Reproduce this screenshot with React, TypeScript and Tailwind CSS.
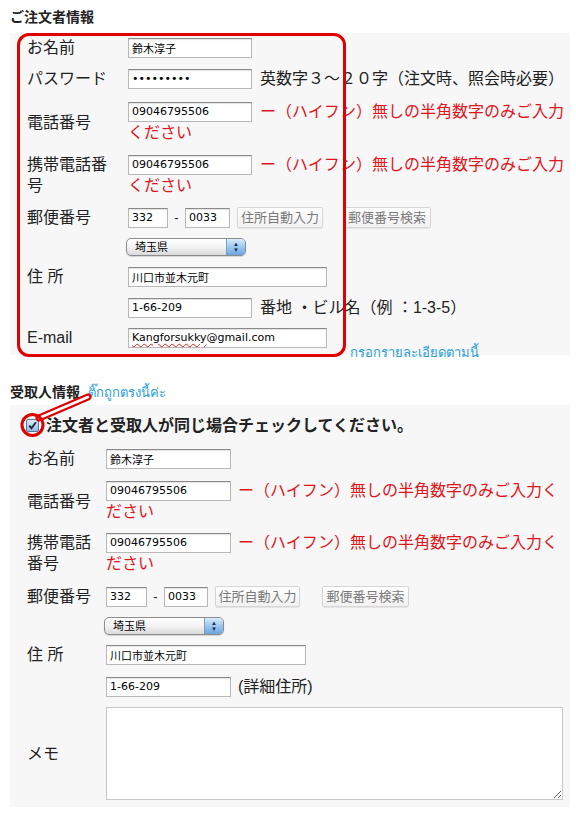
import React from "react";

// 入力欄の共通スタイル
const inputCls =
  "h-[20px] border border-[#b8b8b8] border-t-[#8a8a8a] bg-white px-[3px] text-[11px] leading-[18px] text-black font-['DejaVu_Sans','Noto_Sans_CJK_JP',sans-serif] shadow-[inset_0_1px_1px_rgba(0,0,0,0.12)] outline-none";

const TextBox = ({
  value,
  w,
  type = "text",
}: {
  value: string;
  w: string;
  type?: string;
}) => <input readOnly type={type} value={value} className={`${inputCls} ${w}`} />;

const Btn = ({ children, className }: { children: React.ReactNode; className: string }) => (
  <button
    type="button"
    className={`h-[21px] rounded-[2px] border border-[#d6d6d6] bg-gradient-to-b from-white to-[#f1f1f1] text-[13px] leading-[19px] text-[#7a7a7a] shadow-[0_1px_1px_rgba(0,0,0,0.08)] ${className}`}
  >
    {children}
  </button>
);

const Select = () => (
  <div className="-ml-[2px] flex h-[18px] w-[120px] overflow-hidden rounded-[5px] border border-[#8c8c8c] bg-gradient-to-b from-white via-[#f4f4f4] to-[#d9d9d9] shadow-[0_1px_1px_rgba(0,0,0,0.15)]">
    <span className="flex-1 pl-[8px] text-[11px] leading-[16px] text-black">埼玉県</span>
    <span className="flex w-[19px] flex-col items-center justify-center border-l border-[#7d9cc0] bg-gradient-to-b from-[#d9ecfc] via-[#9cc7ef] to-[#6aa6e0] text-[6px] leading-[6px] text-[#1d2b44]">
      <span>▲</span>
      <span>▼</span>
    </span>
  </div>
);

const Row = ({
  label,
  labelW,
  className,
  children,
}: {
  label?: React.ReactNode;
  labelW: string;
  className: string;
  children: React.ReactNode;
}) => (
  <div className={`flex items-center ${className}`}>
    <div className={`${labelW} shrink-0 text-[16px] leading-[21px] text-[#222]`}>{label}</div>
    <div className="flex flex-col">{children}</div>
  </div>
);

const Line = ({ children }: { children: React.ReactNode }) => (
  <div className="flex h-[21px] items-center whitespace-nowrap text-[16px] leading-[21px]">{children}</div>
);

const App = () => {
  const red = "text-[#e0141b]";
  return (
    <div className="min-h-[817px] w-[576px] bg-white pl-[10px] pr-[6px] pt-[7px] font-['Liberation_Sans','Noto_Sans_CJK_JP',sans-serif] text-[#222]">
      {/* ご注文者情報 */}
      <h2 className="text-[14px] font-bold leading-[20px]">ご注文者情報</h2>
      <div className="relative mt-[6px] bg-[#f7f7f7] pb-[7px] pl-[17px] pt-[4px]">
        <div className="pointer-events-none absolute left-[7px] top-0 h-[324px] w-[329px] rounded-[12px] border-[3px] border-[#e00000]" />
        <span className="absolute left-[340px] top-[311px] text-[13px] leading-[18px] text-[#2a9fd6]">
          กรอกรายละเอียดตามนี้
        </span>

        <Row label="お名前" labelW="w-[101px] pr-[13px]" className="">
          <Line>
            <TextBox value="鈴木淳子" w="w-[124px]" />
          </Line>
        </Row>
        <Row label="パスワード" labelW="w-[101px] pr-[13px]" className="mt-[10px]">
          <Line>
            <TextBox type="password" value="123456789" w="w-[124px]" />
            <span className="ml-[8px]">英数字３～２０字（注文時、照会時必要）</span>
          </Line>
        </Row>
        <Row label="電話番号" labelW="w-[101px] pr-[13px]" className="mt-[12px]">
          <Line>
            <TextBox value="09046795506" w="w-[124px]" />
            <span className={`ml-[8px] ${red}`}>ー（ハイフン）無しの半角数字のみご入力</span>
          </Line>
          <Line>
            <span className={red}>ください</span>
          </Line>
        </Row>
        <Row label="携帯電話番号" labelW="w-[101px] pr-[13px]" className="mt-[11px]">
          <Line>
            <TextBox value="09046795506" w="w-[124px]" />
            <span className={`ml-[8px] ${red}`}>ー（ハイフン）無しの半角数字のみご入力</span>
          </Line>
          <Line>
            <span className={red}>ください</span>
          </Line>
        </Row>
        <Row label="郵便番号" labelW="w-[101px] pr-[13px]" className="mt-[11px]">
          <Line>
            <TextBox value="332" w="w-[40px]" />
            <span className="w-[17px] text-center text-[13px]">-</span>
            <TextBox value="0033" w="w-[45px]" />
            <Btn className="ml-[7px] w-[86px]">住所自動入力</Btn>
            <Btn className="ml-[20px] w-[88px]">郵便番号検索</Btn>
          </Line>
        </Row>
        <Row labelW="w-[101px] pr-[13px]" className="mt-[8px]">
          <Line>
            <Select />
          </Line>
        </Row>
        <Row label="住 所" labelW="w-[101px] pr-[13px]" className="mt-[9px]">
          <Line>
            <TextBox value="川口市並木元町" w="w-[199px]" />
          </Line>
        </Row>
        <Row labelW="w-[101px] pr-[13px]" className="mt-[10px]">
          <Line>
            <TextBox value="1-66-209" w="w-[124px]" />
            <span className="ml-[8px]">番地 ・ビル名（例 ：1-3-5）</span>
          </Line>
        </Row>
        <Row label="E-mail" labelW="w-[101px] pr-[13px]" className="mt-[9px]">
          <Line>
            <div className={`${inputCls} w-[199px]`}>
              <span className="underline decoration-[#e02020] decoration-wavy decoration-1 underline-offset-2">
                Kangforsukky
              </span>
              @gmail.com
            </div>
          </Line>
        </Row>
      </div>

      {/* 受取人情報 */}
      <div className="relative mt-[27px]">
        <svg
          className="pointer-events-none absolute -left-[10px] top-0 z-10"
          width="100"
          height="60"
          viewBox="0 0 100 60"
        >
          <line x1="39" y1="36" x2="88" y2="15" stroke="#e00000" strokeWidth="7" strokeLinecap="round" />
          <line x1="39" y1="36" x2="88" y2="15" stroke="#ffffff" strokeWidth="2.5" strokeLinecap="round" />
          <circle cx="32.5" cy="43" r="10.5" fill="none" stroke="#e00000" strokeWidth="3" />
        </svg>
        <div className="flex items-end">
          <h2 className="text-[14px] font-bold leading-[20px]">受取人情報</h2>
          <span className="ml-[8px] text-[13px] leading-[18px] text-[#2a9fd6]">ติ๊กถูกตรงนี้ค่ะ</span>
        </div>
        <div className="mt-[3px] bg-[#f7f7f7] pb-[7px] pl-[17px] pt-[10px]">
          <div className="flex h-[21px] items-center">
            <span className="-ml-[1px] flex size-[13px] items-center justify-center rounded-[2px] border border-[#54779e] bg-gradient-to-b from-[#dcebf9] to-[#94bde4]">
              <svg width="9" height="9" viewBox="0 0 9 9">
                <path d="M1.2 4.6 L3.5 7.2 L7.9 1.3" fill="none" stroke="#1b2740" strokeWidth="1.8" />
              </svg>
            </span>
            <span className="ml-[7px] text-[16px] font-bold leading-[21px]">
              注文者と受取人が同じ場合チェックしてください。
            </span>
          </div>

          <Row label="お名前" labelW="w-[79px] pr-[9px]" className="mt-[12px]">
            <Line>
              <TextBox value="鈴木淳子" w="w-[125px]" />
            </Line>
          </Row>
          <Row label="電話番号" labelW="w-[79px] pr-[9px]" className="mt-[11px]">
            <Line>
              <TextBox value="09046795506" w="w-[125px]" />
              <span className={`ml-[7px] ${red}`}>ー（ハイフン）無しの半角数字のみご入力く</span>
            </Line>
            <Line>
              <span className={red}>ださい</span>
            </Line>
          </Row>
          <Row label="携帯電話番号" labelW="w-[79px] pr-[9px]" className="mt-[10px]">
            <Line>
              <TextBox value="09046795506" w="w-[125px]" />
              <span className={`ml-[7px] ${red}`}>ー（ハイフン）無しの半角数字のみご入力く</span>
            </Line>
            <Line>
              <span className={red}>ださい</span>
            </Line>
          </Row>
          <Row label="郵便番号" labelW="w-[79px] pr-[9px]" className="mt-[12px]">
            <Line>
              <TextBox value="332" w="w-[41px]" />
              <span className="w-[17px] text-center text-[13px]">-</span>
              <TextBox value="0033" w="w-[44px]" />
              <Btn className="ml-[7px] w-[85px]">住所自動入力</Btn>
              <Btn className="ml-[22px] w-[87px]">郵便番号検索</Btn>
            </Line>
          </Row>
          <Row labelW="w-[79px] pr-[9px]" className="mt-[8px]">
            <Line>
              <Select />
            </Line>
          </Row>
          <Row label="住 所" labelW="w-[79px] pr-[9px]" className="mt-[8px]">
            <Line>
              <TextBox value="川口市並木元町" w="w-[200px]" />
            </Line>
          </Row>
          <Row labelW="w-[79px] pr-[9px]" className="mt-[11px]">
            <Line>
              <TextBox value="1-66-209" w="w-[125px]" />
              <span className="ml-[7px]">(詳細住所)</span>
            </Line>
          </Row>
          <Row label="メモ" labelW="w-[79px] pr-[9px]" className="mt-[10px]">
            <textarea
              readOnly
              className="block h-[93px] w-[457px] border border-[#c8c8c8] bg-white outline-none"
            />
          </Row>
        </div>
      </div>
    </div>
  );
};

export default App;
